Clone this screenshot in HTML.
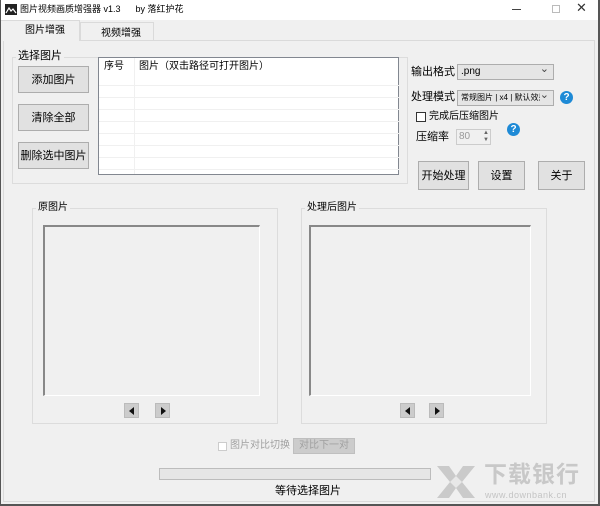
<!DOCTYPE html>
<html><head><meta charset="utf-8"><style>
*{margin:0;padding:0;box-sizing:border-box}
body{width:600px;height:506px;background:#f0f0f0;position:relative;overflow:hidden;font-family:"Liberation Sans","Noto Sans CJK SC",sans-serif;font-size:11px;color:#000;line-height:14px}
.a{position:absolute}
.btn{position:absolute;background:#e1e1e1;border:1px solid #adadad;display:flex;align-items:center;justify-content:center;font-size:11px;white-space:nowrap}
.grp{position:absolute;border:1px solid #dcdcdc}
.lbl{position:absolute;background:#f0f0f0;padding:0 2px;font-size:10px;line-height:12px}
.combo{position:absolute;background:#e5e5e5;border:1px solid #adadad;font-size:10px;line-height:14px;padding-left:3px;white-space:nowrap;overflow:hidden}
.combo:after{content:"⌄";position:absolute;right:4px;top:-3px;font-size:11px;color:#444;background:#e5e5e5}
.help{position:absolute;width:13px;height:13px;border-radius:50%;background:#1e8ad6;color:#fff;font-size:10px;font-weight:bold;text-align:center;line-height:13px}
.nav{position:absolute;width:15px;height:15px;background:#ccc;border:1px solid #bbb}
.tri{position:absolute;top:3px;width:0;height:0;border-top:4px solid transparent;border-bottom:4px solid transparent}
.pic{position:absolute;border-top:2px solid #888;border-left:2px solid #888;border-right:1px solid #fff;border-bottom:1px solid #fff}
</style></head><body>
<div class="a" style="left:0;top:0;width:600px;height:20px;background:#fff"></div>
<div class="a" style="left:0;top:0;width:1px;height:506px;background:#555"></div>
<div class="a" style="left:598px;top:0;width:2px;height:506px;background:#555"></div>
<div class="a" style="left:0;top:504px;width:600px;height:2px;background:#555"></div>
<svg class="a" style="left:5px;top:4px" width="12" height="11"><rect width="12" height="11" fill="#222"/><path d="M1 9 L4 4 L6 7 L8 5 L11 9" stroke="#fff" fill="none" stroke-width="1.2"/></svg>
<div class="a" style="left:20px;top:3px;font-size:9px;line-height:12px">图片视频画质增强器 v1.3 &nbsp;&nbsp;&nbsp;&nbsp; by 落红护花</div>
<div class="a" style="left:512px;top:9px;width:9px;height:1px;background:#444"></div>
<div class="a" style="left:552px;top:5px;width:8px;height:8px;border:1px solid #bbb"></div>
<div class="a" style="left:576px;top:1px;font-size:13px;color:#333">✕</div>
<div class="a" style="left:3px;top:40px;width:592px;height:462px;border:1px solid #dadada;background:#f0f0f0"></div>
<div class="a" style="left:1px;top:20px;width:79px;height:21px;background:#f0f0f0;border-top:1px solid #dadada;border-right:1px solid #dadada"></div>
<div class="a" style="left:25px;top:24px;font-size:10px">图片增强</div>
<div class="a" style="left:80px;top:22px;width:74px;height:18px;border:1px solid #dadada;border-bottom:none;background:#f0f0f0"></div>
<div class="a" style="left:101px;top:27px;font-size:10px">视频增强</div>
<div class="grp" style="left:12px;top:57px;width:396px;height:127px"></div>
<div class="lbl" style="left:16px;top:50px;font-size:11px;line-height:13px">选择图片</div>
<div class="btn" style="left:18px;top:66px;width:71px;height:27px">添加图片</div>
<div class="btn" style="left:18px;top:104px;width:71px;height:27px">清除全部</div>
<div class="btn" style="left:18px;top:142px;width:71px;height:27px">删除选中图片</div>
<div class="a" style="left:98px;top:57px;width:301px;height:118px;background:#fff;border:1px solid #828790">
<div class="a" style="left:35px;top:0;width:1px;height:116px;background:#f0f0f0"></div>
<div class="a" style="left:5px;top:2px;font-size:10px">序号</div>
<div class="a" style="left:40px;top:2px;font-size:10px">图片（双击路径可打开图片）</div>
<div class="a" style="left:0;top:27px;width:300px;height:1px;background:#f0f0f0"></div>
<div class="a" style="left:0;top:39px;width:300px;height:1px;background:#f0f0f0"></div>
<div class="a" style="left:0;top:51px;width:300px;height:1px;background:#f0f0f0"></div>
<div class="a" style="left:0;top:63px;width:300px;height:1px;background:#f0f0f0"></div>
<div class="a" style="left:0;top:75px;width:300px;height:1px;background:#f0f0f0"></div>
<div class="a" style="left:0;top:87px;width:300px;height:1px;background:#f0f0f0"></div>
<div class="a" style="left:0;top:99px;width:300px;height:1px;background:#f0f0f0"></div>
<div class="a" style="left:0;top:111px;width:300px;height:1px;background:#f0f0f0"></div>
</div>
<div class="a" style="left:411px;top:65px">输出格式</div>
<div class="combo" style="left:457px;top:64px;width:97px;height:16px">.png</div>
<div class="a" style="left:411px;top:90px">处理模式</div>
<div class="combo" style="left:457px;top:90px;width:97px;height:16px;font-size:8px;padding-right:14px">常规图片 | x4 | 默认效果</div>
<div class="help" style="left:560px;top:91px">?</div>
<div class="a" style="left:416px;top:112px;width:10px;height:10px;border:1px solid #333;background:#fff"></div>
<div class="a" style="left:429px;top:110px;font-size:10px">完成后压缩图片</div>
<div class="a" style="left:416px;top:130px">压缩率</div>
<div class="a" style="left:456px;top:129px;width:35px;height:16px;border:1px solid #ccc;background:#f0f0f0;font-size:10px;color:#999;padding-left:2px;line-height:14px">80<span style="position:absolute;right:1px;top:0;font-size:6px;line-height:7px;color:#666">▲<br>▼</span></div>
<div class="help" style="left:507px;top:123px">?</div>
<div class="btn" style="left:418px;top:161px;width:51px;height:29px">开始处理</div>
<div class="btn" style="left:478px;top:161px;width:47px;height:29px">设置</div>
<div class="btn" style="left:538px;top:161px;width:47px;height:29px">关于</div>
<div class="grp" style="left:32px;top:208px;width:246px;height:216px"></div>
<div class="lbl" style="left:36px;top:202px">原图片</div>
<div class="pic" style="left:43px;top:225px;width:217px;height:171px"></div>
<div class="nav" style="left:124px;top:403px"><div class="tri" style="left:4px;border-right:5px solid #111"></div></div>
<div class="nav" style="left:155px;top:403px"><div class="tri" style="left:5px;border-left:5px solid #111"></div></div>
<div class="grp" style="left:301px;top:208px;width:246px;height:216px"></div>
<div class="lbl" style="left:305px;top:202px">处理后图片</div>
<div class="pic" style="left:309px;top:225px;width:222px;height:171px"></div>
<div class="nav" style="left:400px;top:403px"><div class="tri" style="left:4px;border-right:5px solid #111"></div></div>
<div class="nav" style="left:429px;top:403px"><div class="tri" style="left:5px;border-left:5px solid #111"></div></div>
<div class="a" style="left:218px;top:442px;width:9px;height:9px;border:1px solid #ccc;background:#fff"></div>
<div class="a" style="left:230px;top:439px;font-size:10px;color:#a0a0a0">图片对比切换</div>
<div class="a" style="left:293px;top:438px;width:62px;height:16px;background:#ccc;border:1px solid #bfbfbf;color:#a0a0a0;font-size:10px;text-align:center;line-height:14px">对比下一对</div>
<div class="a" style="left:159px;top:468px;width:272px;height:12px;background:#e6e6e6;border:1px solid #bcbcbc"></div>
<div class="a" style="left:275px;top:484px;font-size:11px">等待选择图片</div>
<svg class="a" style="left:435px;top:464px" width="42" height="36"><path d="M2 2 H14 L21 12 L28 2 H40 L27 18 L40 34 H28 L21 24 L14 34 H2 L15 18 Z" fill="#cacaca"/><path d="M21 12 L27 18 L21 24 L15 18Z" fill="#e8e8e8"/></svg>
<div class="a" style="left:484px;top:461px;font-size:23px;font-weight:bold;color:#c8c8c8;letter-spacing:1px;line-height:26px">下载银行</div>
<div class="a" style="left:485px;top:488px;font-size:9px;color:#c4c4c4;letter-spacing:0.5px">www.downbank.cn</div>
</body></html>
